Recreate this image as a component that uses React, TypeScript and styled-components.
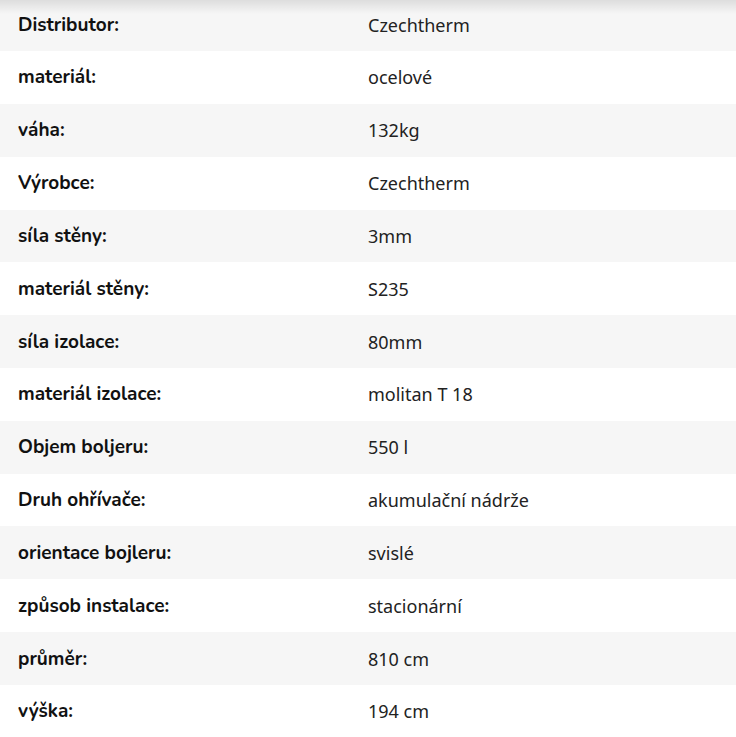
import React from 'react'
import styled, { createGlobalStyle } from 'styled-components'

const GlobalStyle = createGlobalStyle`
  html, body {
    margin: 0;
    padding: 0;
    background: #ffffff;
  }
  body {
    font-family: "Nunito", "Lato", "Noto Sans", sans-serif;
    color: #1a1a1a;
    overflow: hidden;
  }
`

const params: [string, string][] = [
  ['Distributor:', 'Czechtherm'],
  ['materiál:', 'ocelové'],
  ['váha:', '132kg'],
  ['Výrobce:', 'Czechtherm'],
  ['síla stěny:', '3mm'],
  ['materiál stěny:', 'S235'],
  ['síla izolace:', '80mm'],
  ['materiál izolace:', 'molitan T 18'],
  ['Objem boljeru:', '550 l'],
  ['Druh ohřívače:', 'akumulační nádrže'],
  ['orientace bojleru:', 'svislé'],
  ['způsob instalace:', 'stacionární'],
  ['průměr:', '810 cm'],
  ['výška:', '194 cm'],
]

export default function App() {
  return (
    <>
      <GlobalStyle />
      <Wrapper>
        <ParamsTable>
          <tbody>
            {params.map(([label, value], i) => (
              <Row key={label} $striped={i % 2 === 0}>
                <Label>{label}</Label>
                <Value>{value}</Value>
              </Row>
            ))}
          </tbody>
        </ParamsTable>
      </Wrapper>
    </>
  )
}

const Wrapper = styled.div`
  position: relative;
  width: 736px;
  height: 737px;
  overflow: hidden;

  &::after {
    content: "";
    position: absolute;
    top: 0;
    left: 0;
    right: 0;
    height: 14px;
    background: linear-gradient(180deg, rgba(0,0,0,0.1) 0%, rgba(0,0,0,0) 100%);
    pointer-events: none;
  }
`

const ParamsTable = styled.table`
  width: 100%;
  border-collapse: collapse;
  margin-top: -1.8px;
`

const Row = styled.tr<{ $striped: boolean }>`
  height: 52.83px;
  background: ${p => (p.$striped ? '#f6f6f6' : '#ffffff')};
`

const Label = styled.td`
  width: 350px;
  padding: 0 0 0 18px;
  font-family: "Nunito", "Lato", "Noto Sans", sans-serif;
  font-weight: 700;
  font-size: 19px;
  color: #111111;
  vertical-align: middle;
`

const Value = styled.td`
  padding: 0;
  font-family: "Noto Sans", "Open Sans", sans-serif;
  font-weight: 400;
  font-size: 18px;
  color: #222222;
  vertical-align: middle;
`
